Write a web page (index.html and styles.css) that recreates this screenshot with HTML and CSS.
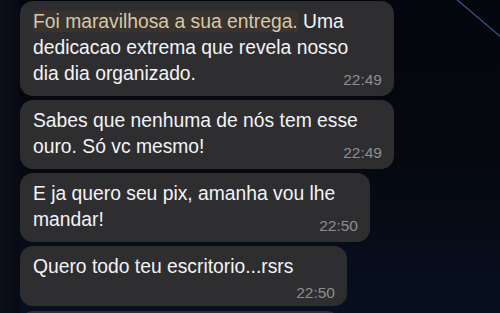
FILE: index.html
```html
<!DOCTYPE html>
<html lang="pt">
<head>
<meta charset="utf-8">
<link rel="stylesheet" href="styles.css">
</head>
<body>
<div class="screen">
  <svg class="streak" width="60" height="50" viewBox="0 0 60 50"><line x1="15" y1="-2" x2="62" y2="38" stroke="#3b5d8c" stroke-width="1.2"/></svg>
  <div class="chat">
    <div class="bubble wide">
      <div class="text"><span class="hl">Foi maravilhosa a sua entrega.</span> Uma<br>dedicacao extrema que revela nosso<br>dia dia organizado.</div>
      <div class="time">22:49</div>
    </div>
    <div class="bubble wide">
      <div class="text">Sabes que nenhuma de nós tem esse<br>ouro. Só vc mesmo!</div>
      <div class="time">22:49</div>
    </div>
    <div class="bubble mid">
      <div class="text">E ja quero seu pix, amanha vou lhe<br>mandar!</div>
      <div class="time">22:50</div>
    </div>
    <div class="bubble narrow single">
      <div class="text">Quero todo teu escritorio...rsrs</div>
      <div class="time own-line">22:50</div>
    </div>
    <div class="bubble next">
      <div class="text">&nbsp;</div>
    </div>
  </div>
</div>
</body>
</html>
```

FILE: styles.css
```css
html, body {
  margin: 0;
  padding: 0;
}
body {
  width: 500px;
  height: 313px;
  overflow: hidden;
  background: #04060d;
}
.screen {
  position: relative;
  width: 500px;
  height: 313px;
  overflow: hidden;
  background: linear-gradient(180deg, #04060e 0%, #05080f 50%, #081020 100%);
}
.screen::before {
  content: "";
  position: absolute;
  left: 0;
  top: 0;
  bottom: 0;
  width: 20px;
  background: linear-gradient(90deg, #0c101a, #070a12);
}
.streak {
  position: absolute;
  right: 0;
  top: 0;
}
.chat {
  position: relative;
  display: flex;
  flex-direction: column;
  align-items: flex-start;
  gap: 4.5px;
  padding: 1px 0 0 20px;
  font-family: "Liberation Sans", Arial, sans-serif;
}
.bubble {
  background: #2e2e30;
  border-radius: 13px;
  padding: 8px 12px 6.5px 13px;
  color: #f3f3f5;
  box-sizing: border-box;
}
.bubble.wide { width: 374px; }
.bubble.mid { width: 350px; }
.bubble.narrow { width: 327px; }
.bubble.single { padding-bottom: 4px; }
.bubble.next { width: 320px; }
.text {
  font-size: 19.3px;
  line-height: 26px;
  white-space: nowrap;
}
.hl {
  color: #d8c7aa;
  background: #39332e;
}
.time {
  text-align: right;
  font-size: 15.5px;
  line-height: 18px;
  color: #8d8d92;
  margin-top: -16px;
}
.time.own-line {
  margin-top: 4px;
}
```
